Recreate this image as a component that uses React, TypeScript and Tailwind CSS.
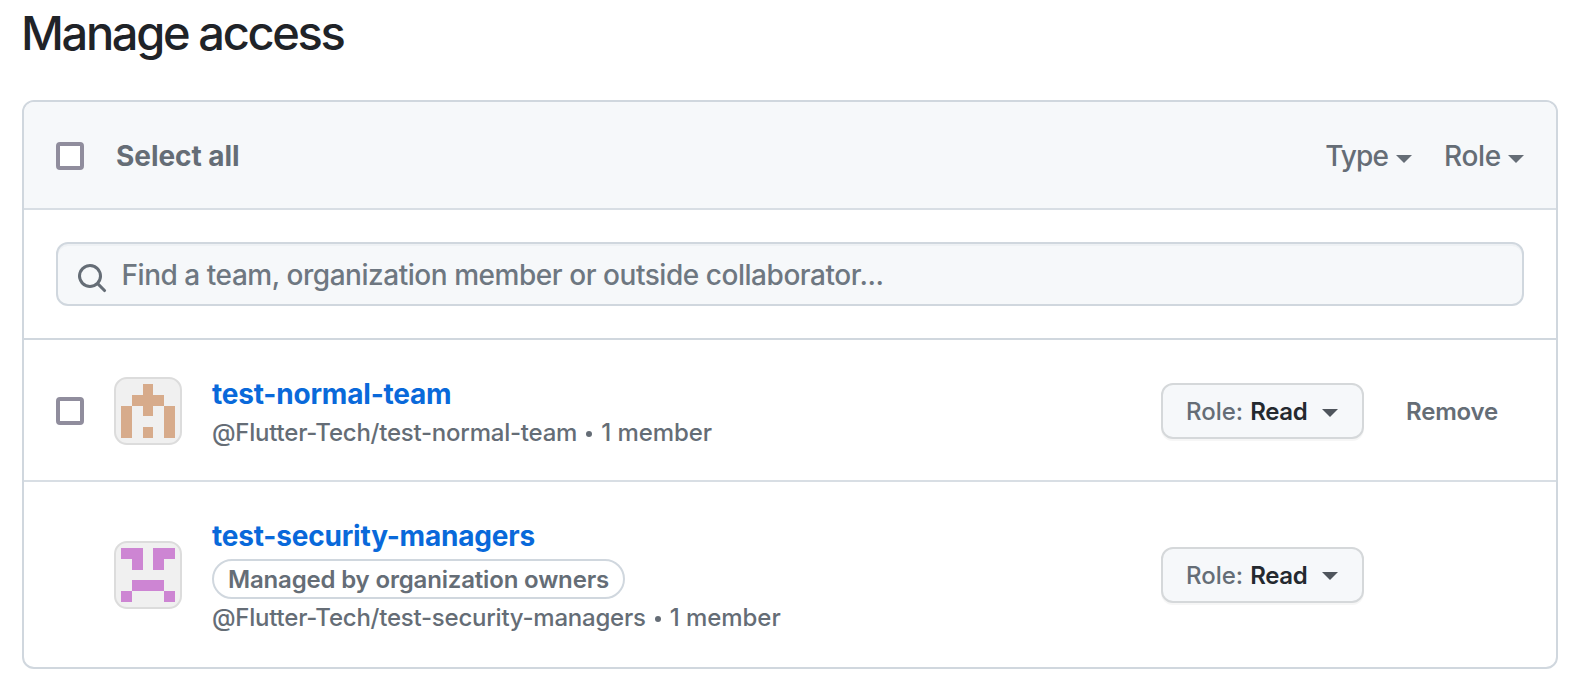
import { useState } from "react";

type Cell = [number, number];

interface Team {
  name: string;
  handle: string;
  members: string;
  badge?: string;
  removable: boolean;
  color: string;
  cells: Cell[];
}

const teams: Team[] = [
  {
    name: "test-normal-team",
    handle: "@Flutter-Tech/test-normal-team",
    members: "1 member",
    removable: true,
    color: "#d7ab8b",
    cells: [[2, 0], [1, 1], [2, 1], [3, 1], [0, 2], [2, 2], [4, 2], [0, 3], [4, 3], [0, 4], [2, 4], [4, 4]],
  },
  {
    name: "test-security-managers",
    handle: "@Flutter-Tech/test-security-managers",
    members: "1 member",
    badge: "Managed by organization owners",
    removable: false,
    color: "#cd85d3",
    cells: [[0, 0], [1, 0], [3, 0], [4, 0], [1, 1], [3, 1], [1, 3], [2, 3], [3, 3], [0, 4], [4, 4]],
  },
];

function Caret({ className }: { className?: string }) {
  return (
    <svg viewBox="0 0 16 8" className={`h-2 w-4 shrink-0 ${className ?? ""}`} fill="currentColor" aria-hidden="true">
      <path d="M0 0h16L8 8z" />
    </svg>
  );
}

function Checkbox({ label }: { label: string }) {
  const [on, setOn] = useState(false);
  return (
    <button
      type="button"
      role="checkbox"
      aria-checked={on}
      aria-label={label}
      onClick={() => setOn(!on)}
      className="size-7 shrink-0 rounded-[4px] border-4 border-[#908d9d] bg-white"
    />
  );
}

function Identicon({ color, cells }: { color: string; cells: Cell[] }) {
  return (
    <div className="size-[68px] shrink-0 overflow-hidden rounded-[13px] border-2 border-[#dcdcdc] bg-[#f0f0f0]">
      <svg viewBox="0 0 12 12" className="size-16" fill={color} shapeRendering="crispEdges" aria-hidden="true">
        {cells.map(([x, y]) => (
          <rect key={`${x}-${y}`} x={1 + x * 2} y={1 + y * 2} width="2" height="2" />
        ))}
      </svg>
    </div>
  );
}

function RoleButton() {
  return (
    <button
      type="button"
      className="flex h-14 w-[203px] shrink-0 items-center rounded-xl border-2 border-[#d5d8da] bg-[#f6f8fa] pl-[23px] text-2xl shadow-[0_2px_0_rgba(27,31,36,0.04)]"
    >
      <span className="pt-0.5 font-[450] text-[#656d76]">Role:</span>
      <span className="ml-[7px] pt-0.5 font-[580] tracking-[-0.35px] text-[#24292f]">Read</span>
      <Caret className="ml-[15px] mt-[3px] text-[#4f555c]" />
    </button>
  );
}

function TeamRow({ team }: { team: Team }) {
  return (
    <>
      {team.removable ? <Checkbox label={`Select ${team.name}`} /> : <div className="w-7 shrink-0" />}
      <div className="ml-[30px]">
        <Identicon color={team.color} cells={team.cells} />
      </div>
      <div className="ml-[30px] flex grow flex-col items-start pt-0.5">
        <a href="#" className="text-[28px] leading-[42px] font-[680] tracking-[-0.2px] text-[#0969da]">
          {team.name}
        </a>
        {team.badge && (
          <span className="mt-0.5 mb-px flex h-10 items-center rounded-full border-2 border-[#d0d7de] px-3.5 pt-px text-2xl font-[560] tracking-[-0.17px] text-[#656d76]">
            {team.badge}
          </span>
        )}
        <span className="flex h-9 items-center text-2xl font-[450] text-[#656d76]">
          <span className="tracking-[-0.23px]">{team.handle}</span>
          <span className="mx-[9px] mt-0.5 size-[6px] rounded-full bg-[#656d76]" />
          <span className="tracking-[-0.05px]">{team.members}</span>
        </span>
      </div>
      <RoleButton />
      <div className="w-[160px] shrink-0 pt-0.5 pl-[42px]">
        {team.removable && (
          <button type="button" className="text-2xl font-[580] tracking-[-0.2px] text-[#656d76]">
            Remove
          </button>
        )}
      </div>
    </>
  );
}

export default function App() {
  return (
    <main className="h-[680px] w-[1570px] overflow-hidden bg-white pr-3 pl-[22px] font-['Inter',sans-serif]">
      <h1 className="-ml-px h-[100px] text-[47px] leading-[66px] font-[450] tracking-[-2.35px] text-[#1f2328]">
        Manage access
      </h1>
      <section className="w-[1536px] overflow-hidden rounded-xl border-2 border-[#d0d7de]">
        <header className="flex h-[108px] items-center border-b-2 border-[#d8dee4] bg-[#f6f8fa] px-8 pt-0.5 text-[28px] text-[#656d76]">
          <Checkbox label="Select all" />
          <span className="ml-8 grow font-[660] tracking-[-0.05px]">Select all</span>
          <button type="button" className="flex items-center font-[450]">
            <span className="tracking-[-0.9px]">Type</span>
            <Caret className="ml-[8px] mt-1.5" />
          </button>
          <button type="button" className="ml-8 flex items-center font-[450]">
            <span className="tracking-[-0.3px]">Role</span>
            <Caret className="ml-[7px] mt-1.5" />
          </button>
        </header>
        <div className="h-[130px] border-b-2 border-[#d0d7de] px-8 pt-8">
          <label className="flex h-16 items-center rounded-xl border-2 border-[#d0d7de] bg-[#f6f8fa] pl-[18px] shadow-[inset_0_2px_0_rgba(208,215,222,0.2)]">
            <svg viewBox="0 0 16 16" className="mt-2 size-8 shrink-0 text-[#656d76]" fill="currentColor" aria-hidden="true">
              <path
                fillRule="evenodd"
                d="M11.5 7a4.5 4.5 0 1 1-9 0 4.5 4.5 0 0 1 9 0zm-.82 4.74a6 6 0 1 1 1.06-1.06l3.04 3.04a.75.75 0 1 1-1.06 1.06l-3.04-3.04z"
              />
            </svg>
            <input
              type="text"
              placeholder="Find a team, organization member or outside collaborator..."
              className="ml-[13.5px] grow bg-transparent pt-0.5 text-[28px] font-[450] tracking-[-0.46px] outline-none placeholder:text-[#6e7781]"
            />
          </label>
        </div>
        <div className="flex h-[142px] items-center border-b-2 border-[#d8dee4] px-8 pt-0.5">
          <TeamRow team={teams[0]} />
        </div>
        <div className="flex h-[185px] items-center px-8">
          <TeamRow team={teams[1]} />
        </div>
      </section>
    </main>
  );
}
